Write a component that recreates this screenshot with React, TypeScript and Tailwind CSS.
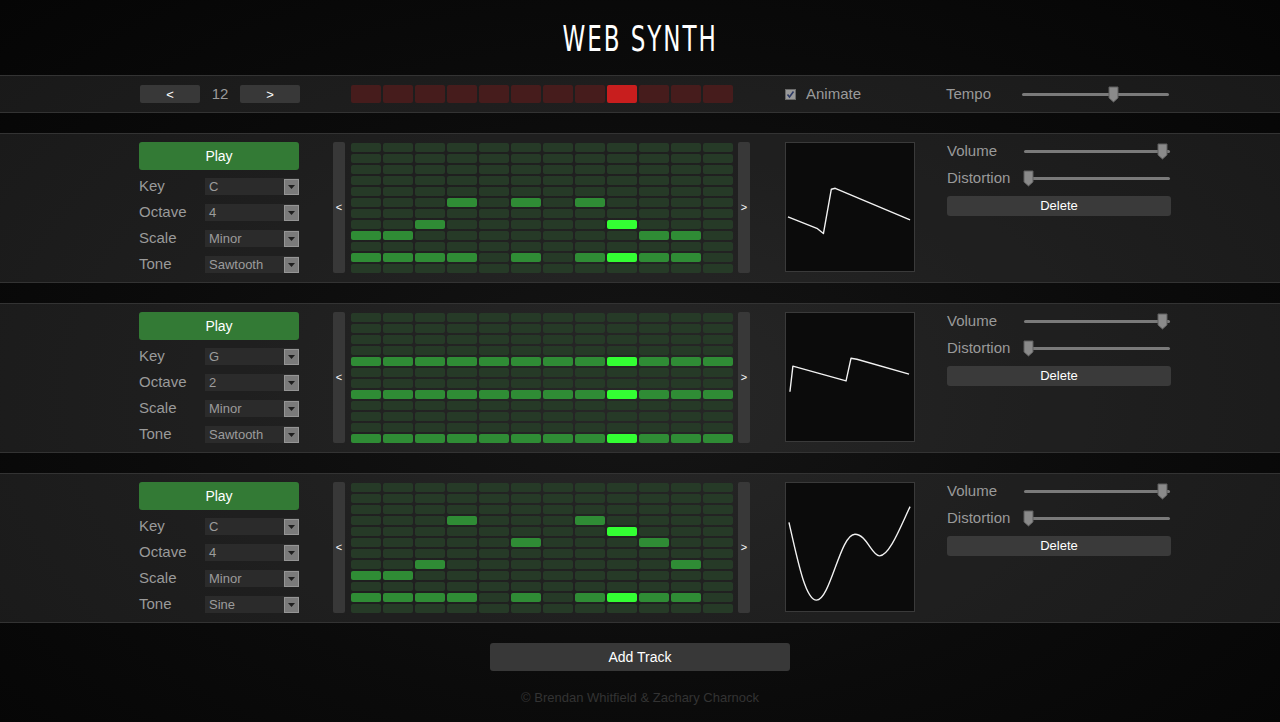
import { useState } from "react";

type Track = {
  key: string;
  octave: string;
  scale: string;
  tone: string;
  notes: Record<number, number[]>;
  wave: string;
};

const ALL = [0, 1, 2, 3, 4, 5, 6, 7, 8, 9, 10, 11];
const CURRENT = 8;

const tracks: Track[] = [
  {
    key: "C",
    octave: "4",
    scale: "Minor",
    tone: "Sawtooth",
    notes: { 5: [3, 5, 7], 7: [2, 8], 8: [0, 1, 9, 10], 10: [0, 1, 2, 3, 5, 7, 8, 9, 10] },
    wave: "M2 75 L32 87 L38 92 L46 47 L50 46 L126 78",
  },
  {
    key: "G",
    octave: "2",
    scale: "Minor",
    tone: "Sawtooth",
    notes: { 4: ALL, 7: ALL, 11: ALL },
    wave: "M4 80 L7 54 L61 69 L66 46 L72 47 L125 62",
  },
  {
    key: "C",
    octave: "4",
    scale: "Minor",
    tone: "Sine",
    notes: { 3: [3, 7], 4: [8], 5: [5, 9], 7: [2, 10], 8: [0, 1], 10: [0, 1, 2, 3, 5, 7, 8, 9, 10] },
    wave: "M3 40 C 12 80, 20 119, 31 119 C 45 119, 55 52, 70 52 C 82 52, 87 74, 95 74 C 105 74, 116 45, 126 24",
  },
];

const Thumb = () => (
  <svg width="11" height="17" viewBox="0 0 11 17">
    <path d="M1 1 H10 V12 L5.5 16 L1 12 Z" fill="#8a8a8a" stroke="#5e5e5e" strokeWidth="1" />
  </svg>
);

const Slider = ({ pos, width }: { pos: number; width: string }) => (
  <div className={`relative h-[17px] flex items-center ${width}`}>
    <div className="h-[3px] w-full bg-[#7a7a7a] rounded-sm" />
    <div className="absolute top-0" style={{ left: `${pos}px` }}>
      <Thumb />
    </div>
  </div>
);

const Select = ({ value }: { value: string }) => (
  <div className="flex h-[17px] w-[94px] bg-[#2b2b2b] items-center">
    <span className="flex-1 pl-[4px] text-[13px] text-[#9c9c9c] leading-none">{value}</span>
    <div className="w-[15px] h-[16px] bg-[#7a7a7a] border border-[#959595] flex items-center justify-center">
      <svg width="7" height="4" viewBox="0 0 7 4">
        <path d="M0 0 H7 L3.5 4 Z" fill="#1e1e1e" />
      </svg>
    </div>
  </div>
);

const Grid = ({ notes }: { notes: Record<number, number[]> }) => (
  <div className="flex flex-col gap-[2px] w-[382px] pt-[1px]">
    {Array.from({ length: 12 }).map((_, r) => (
      <div key={r} className="flex gap-[2px]">
        {ALL.map((c) => {
          const on = (notes[r] || []).includes(c);
          const cls = on
            ? c === CURRENT
              ? "bg-[#33ff33]"
              : "bg-[#2f8c35]"
            : "bg-[#263a27]";
          return <div key={c} className={`w-[30px] h-[9px] rounded-[2px] ${cls}`} />;
        })}
      </div>
    ))}
  </div>
);

const ArrowBar = ({ label }: { label: string }) => (
  <div className="w-[12px] h-[131px] bg-[#383838] rounded-[2px] flex items-center justify-center text-white text-[11px]">
    {label}
  </div>
);

const TrackPanel = ({ t }: { t: Track }) => (
  <div className="h-[150px] border-y border-[#333] bg-white/[0.08]">
    <div className="ml-[139px] flex pt-[8px]">
      <div className="w-[160px] flex flex-col">
        <button className="h-[28px] w-[160px] bg-[#337a35] rounded-[3px] text-white text-[14px]">Play</button>
        <div className="flex flex-col gap-[9px] mt-[8px]">
          {[
            ["Key", t.key],
            ["Octave", t.octave],
            ["Scale", t.scale],
            ["Tone", t.tone],
          ].map(([l, v]) => (
            <div key={l} className="flex items-center h-[17px]">
              <span className="w-[66px] text-[15px] text-[#9a9a9a]">{l}</span>
              <Select value={v} />
            </div>
          ))}
        </div>
      </div>
      <div className="ml-[34px] flex gap-[6px]">
        <ArrowBar label="<" />
        <Grid notes={t.notes} />
        <div className="-ml-[1px]">
          <ArrowBar label=">" />
        </div>
      </div>
      <div className="ml-[35px] w-[130px] h-[130px] bg-[#0b0b0b] border border-[#3a3a3a]">
        <svg width="128" height="128" viewBox="0 0 130 130">
          <path d={t.wave} fill="none" stroke="#f2f2f2" strokeWidth="1.4" strokeLinejoin="round" />
        </svg>
      </div>
      <div className="ml-[32px] w-[224px] flex flex-col">
        <div className="flex items-center h-[18px]">
          <span className="w-[77px] text-[15px] text-[#9a9a9a]">Volume</span>
          <Slider pos={133} width="w-[146px]" />
        </div>
        <div className="flex items-center h-[18px] mt-[9px]">
          <span className="w-[77px] text-[15px] text-[#9a9a9a]">Distortion</span>
          <Slider pos={-1} width="w-[146px]" />
        </div>
        <button className="mt-[9px] h-[20px] w-[224px] bg-[#3a3a3a] rounded-[3px] text-white text-[13px]">Delete</button>
      </div>
    </div>
  </div>
);

export default function App() {
  const [animate] = useState(true);

  return (
    <div
      className="min-h-screen w-full bg-[radial-gradient(ellipse_at_50%_55%,#151515_0%,#0b0b0b_55%,#050505_100%)]"
      style={{ fontFamily: '"Liberation Sans", Arial, sans-serif' }}
    >
      <header className="h-[75px] flex items-center justify-center">
        <h1
          className="text-white text-[36px] tracking-[3px] scale-x-[0.64] font-normal pt-[2px]"
          style={{ fontFamily: '"DejaVu Sans", sans-serif' }}
        >
          WEB SYNTH
        </h1>
      </header>

      <div className="h-[38px] border-y border-[#333] bg-white/[0.08] flex items-center">
        <div className="ml-[140px] flex items-center w-[160px]">
          <button className="w-[60px] h-[18px] bg-[#383838] rounded-[2px] text-white text-[13px] leading-none">&lt;</button>
          <span className="w-[40px] text-center text-[15px] text-[#9a9a9a]">12</span>
          <button className="w-[60px] h-[18px] bg-[#383838] rounded-[2px] text-white text-[13px] leading-none">&gt;</button>
        </div>
        <div className="ml-[51px] flex gap-[2px]">
          {ALL.map((c) => (
            <div key={c} className={`w-[30px] h-[18px] rounded-[2px] ${c === CURRENT ? "bg-[#c81e1e]" : "bg-[#461c1c]"}`} />
          ))}
        </div>
        <div className="ml-[52px] flex items-center w-[161px]">
          <div className="w-[11px] h-[11px] bg-[#9a9a9a] border border-[#6a6a6a] flex items-center justify-center">
            {animate && (
              <svg width="9" height="9" viewBox="0 0 9 9">
                <path d="M1.5 4.5 L3.5 7 L7.5 1.5" fill="none" stroke="#2e3b66" strokeWidth="1.6" />
              </svg>
            )}
          </div>
          <span className="ml-[10px] text-[15px] text-[#9a9a9a]">Animate</span>
        </div>
        <span className="w-[76px] text-[15px] text-[#9a9a9a]">Tempo</span>
        <Slider pos={86} width="w-[147px]" />
      </div>

      <div className="flex flex-col gap-[20px] mt-[20px]">
        {tracks.map((t, i) => (
          <TrackPanel key={i} t={t} />
        ))}
      </div>

      <div className="flex flex-col items-center pt-[20px]">
        <button className="w-[300px] h-[28px] bg-[#383838] rounded-[3px] text-white text-[14px]">Add Track</button>
        <p className="mt-[17px] text-[13px] text-[#333]">© Brendan Whitfield &amp; Zachary Charnock</p>
      </div>
    </div>
  );
}
